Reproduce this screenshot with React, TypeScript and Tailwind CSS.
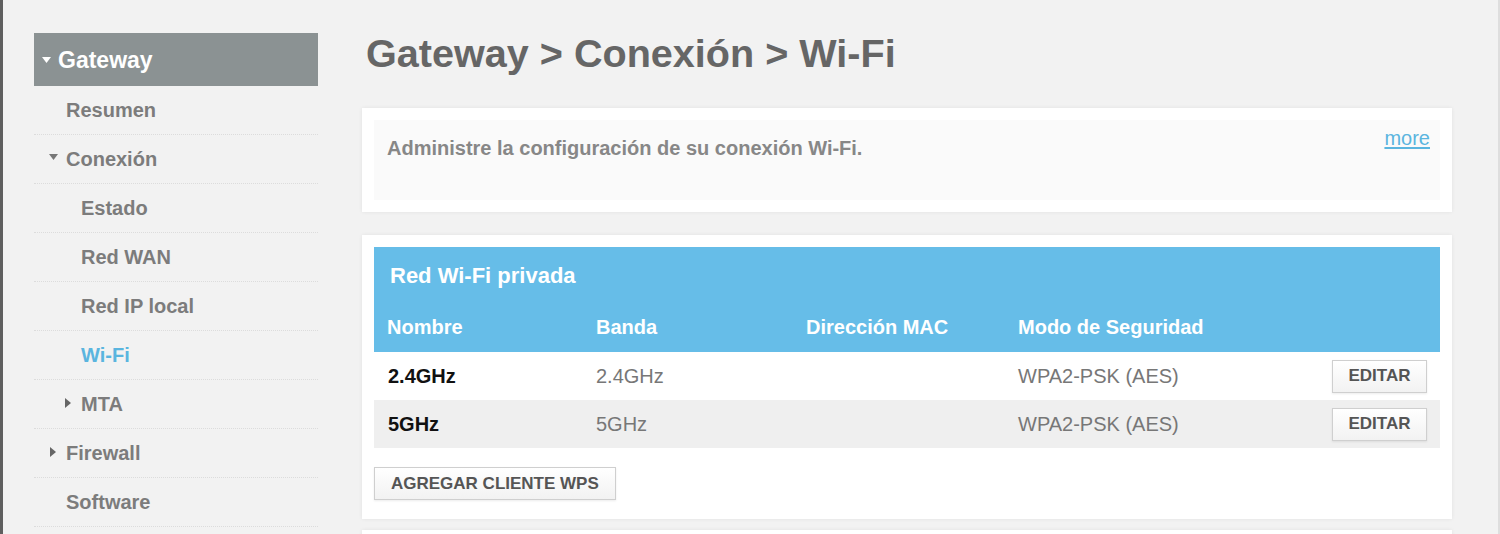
import React from "react";

function TriDown({ className = "" }: { className?: string }) {
  return (
    <svg width="9" height="6" viewBox="0 0 9 6" className={className}>
      <path d="M0 0 L9 0 L4.5 6 Z" fill="currentColor" />
    </svg>
  );
}
function TriRight({ className = "" }: { className?: string }) {
  return (
    <svg width="6" height="10" viewBox="0 0 6 10" className={className}>
      <path d="M0 0 L6 5 L0 10 Z" fill="currentColor" />
    </svg>
  );
}

type NavItem = { label: string; indent: number; icon?: "down" | "right"; active?: boolean };

const items: NavItem[] = [
  { label: "Resumen", indent: 32 },
  { label: "Conexión", indent: 32, icon: "down" },
  { label: "Estado", indent: 47 },
  { label: "Red WAN", indent: 47 },
  { label: "Red IP local", indent: 47 },
  { label: "Wi-Fi", indent: 47, active: true },
  { label: "MTA", indent: 47, icon: "right" },
  { label: "Firewall", indent: 32, icon: "right" },
  { label: "Software", indent: 32 },
];

function NavRow({ item }: { item: NavItem }) {
  return (
    <div className="relative h-[49px] flex items-center border-b border-dotted border-[#dcdcdc]">
      {item.icon === "down" && (
        <span className="absolute text-[#777]" style={{ left: item.indent - 17, top: 19 }}>
          <TriDown />
        </span>
      )}
      {item.icon === "right" && (
        <span className="absolute text-[#666]" style={{ left: item.indent - 16, top: 18 }}>
          <TriRight />
        </span>
      )}
      <span
        className={
          "text-[20px] font-bold leading-[24px] " +
          (item.active ? "text-[#5ab5df]" : "text-[#7c7c7c]")
        }
        style={{ paddingLeft: item.indent }}
      >
        {item.label}
      </span>
    </div>
  );
}

function Btn({ children, className = "" }: { children: React.ReactNode; className?: string }) {
  return (
    <div
      className={
        "h-[33px] flex items-center border border-[#cfcfcf] bg-gradient-to-b from-white to-[#f2f2f2] shadow-[0_1px_2px_rgba(0,0,0,0.08)] text-[17px] font-bold text-[#555] " +
        className
      }
    >
      {children}
    </div>
  );
}

const rows = [
  { name: "2.4GHz", band: "2.4GHz", mac: "", sec: "WPA2-PSK (AES)", bg: "bg-white" },
  { name: "5GHz", band: "5GHz", mac: "", sec: "WPA2-PSK (AES)", bg: "bg-[#efefef]" },
];

export default function App() {
  return (
    <div className="w-[1500px] h-[534px] overflow-hidden flex bg-[#f2f2f2] font-['Liberation_Sans',Arial,sans-serif]">
      <div className="w-[3px] h-full bg-[#5f5f5f]" />
      {/* Sidebar */}
      <div className="w-[284px] ml-[31px] pt-[33px] shrink-0">
        <div className="h-[53px] bg-[#8b9293] flex items-center relative">
          <span className="absolute left-[8px] top-[24px] text-white">
            <TriDown />
          </span>
          <span className="pl-[24px] text-[23px] font-bold text-white leading-[28px]">Gateway</span>
        </div>
        {items.map((it) => (
          <NavRow key={it.label} item={it} />
        ))}
      </div>
      {/* Main */}
      <div className="w-[1090px] ml-[44px] shrink-0">
        <h1 className="pt-[33px] pl-[4px] text-[39.6px] leading-[40px] font-bold text-[#666]">
          Gateway &gt; Conexión &gt; Wi-Fi
        </h1>
        <div className="mt-[35px] bg-white p-[12px] shadow-[0_0_4px_rgba(0,0,0,0.07)]">
          <div className="h-[80px] bg-[#fafafa] flex justify-between items-start pl-[13px] pr-[10px] pt-[6px]">
            <span className="mt-[10px] text-[20px] leading-[24px] font-bold text-[#878787]">
              Administre la configuración de su conexión Wi-Fi.
            </span>
            <span className="text-[20px] leading-[24px] text-[#5ab5df] underline underline-offset-2">more</span>
          </div>
        </div>
        <div className="mt-[23px] bg-white px-[12px] pt-[12px] pb-[19px] shadow-[0_0_4px_rgba(0,0,0,0.07)]">
          <div className="bg-[#66bde8] pt-[16px] pb-[13px]">
            <div className="pl-[16px] text-[22px] leading-[26px] font-bold text-white">Red Wi-Fi privada</div>
            <div className="mt-[26px] flex pl-[13px] text-[20px] leading-[24px] font-bold text-white">
              <div className="w-[209px]">Nombre</div>
              <div className="w-[210px]">Banda</div>
              <div className="w-[212px]">Dirección MAC</div>
              <div>Modo de Seguridad</div>
            </div>
          </div>
          {rows.map((r) => (
            <div key={r.name} className={"h-[48px] flex items-center pl-[14px] pr-[13px] " + r.bg}>
              <div className="w-[208px] text-[20px] font-bold text-[#111]">{r.name}</div>
              <div className="w-[210px] text-[20px] text-[#777]">{r.band}</div>
              <div className="w-[212px] text-[20px] text-[#777]">{r.mac}</div>
              <div className="flex-1 text-[20px] text-[#777]">{r.sec}</div>
              <Btn className="w-[95px] justify-center">EDITAR</Btn>
            </div>
          ))}
          <div className="mt-[19px] flex">
            <Btn className="w-[242px] pl-[16px]">AGREGAR CLIENTE WPS</Btn>
          </div>
        </div>
        <div className="mt-[11px] h-[40px] bg-white shadow-[0_0_4px_rgba(0,0,0,0.07)]" />
      </div>
      <div className="flex-1" />
      <div className="w-[2px] h-full bg-[#dedede]" />
    </div>
  );
}
